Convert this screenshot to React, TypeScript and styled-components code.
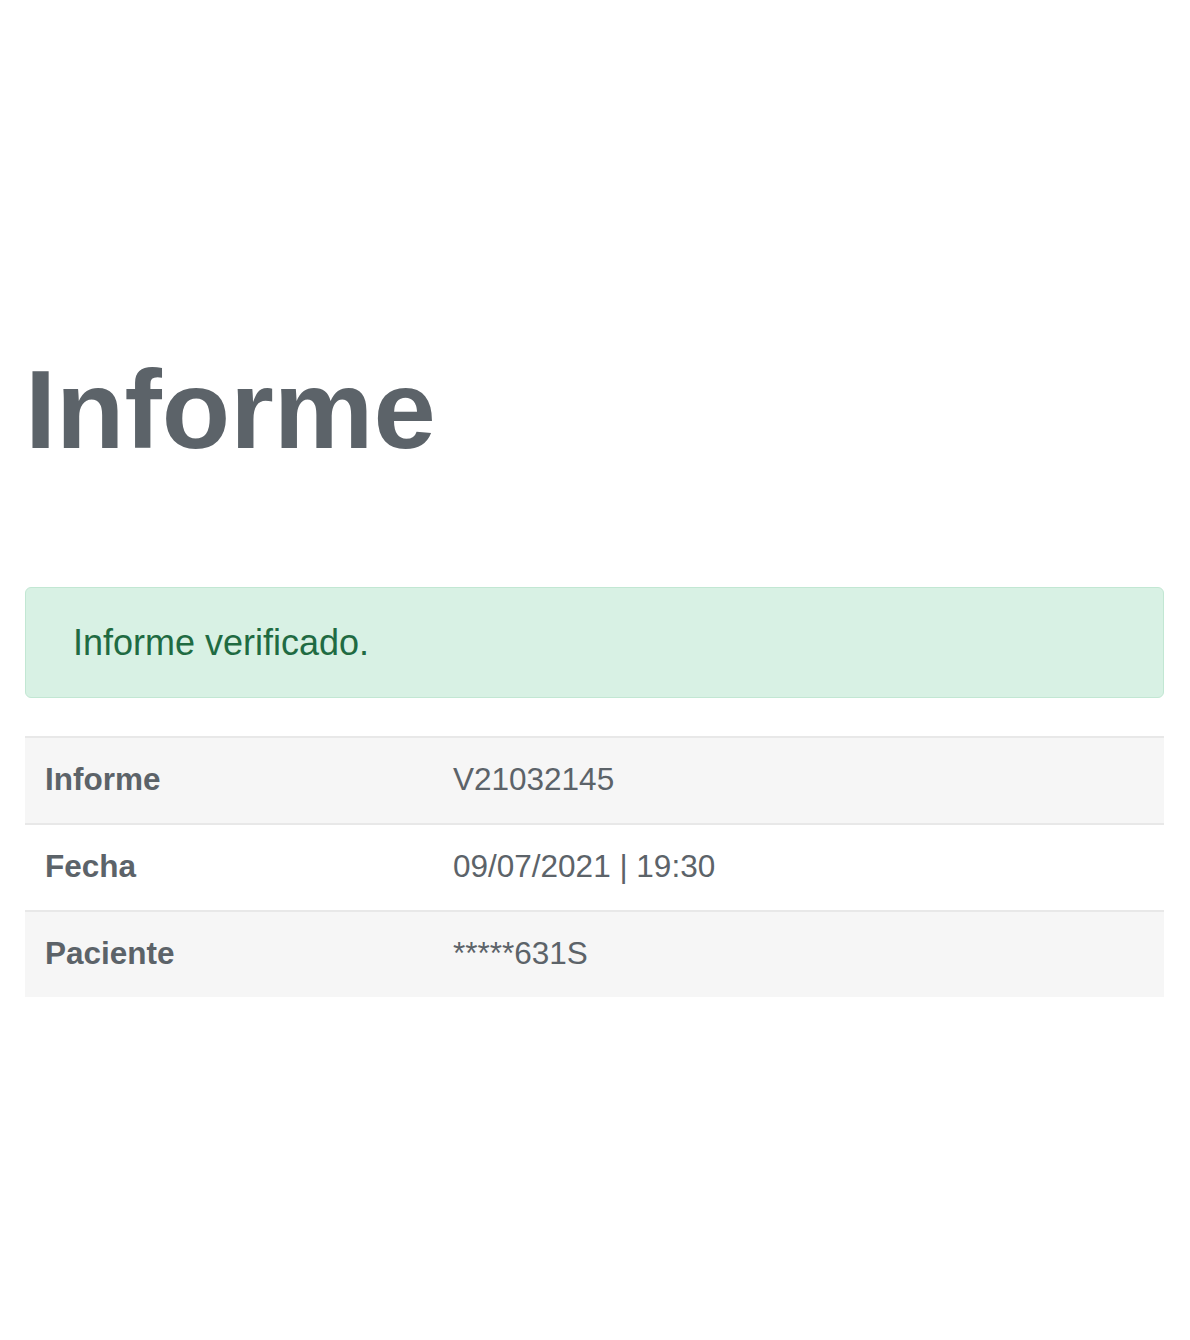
import React from 'react';
import styled, { createGlobalStyle } from 'styled-components';

const GlobalStyle = createGlobalStyle`
  html, body {
    margin: 0;
    padding: 0;
    background: #fff;
  }
  body {
    font-family: "Liberation Sans", Arial, sans-serif;
    color: #5c6369;
  }
`;

const Page = styled.div`
  padding: 343px 26px 200px 25px;
`;

const Title = styled.h1`
  margin: 0 0 110px;
  font-size: 112px;
  line-height: 1.2;
  font-weight: 700;
  color: #5c6369;
`;

const Alert = styled.div`
  padding: 28px 47px 27px;
  font-size: 36px;
  line-height: 54px;
  color: #1f6b42;
  background: #d8f1e4;
  border: 1px solid #c2e7d3;
  border-radius: 6px;
  margin-bottom: 38px;
`;

const Table = styled.table`
  width: 100%;
  border-collapse: collapse;
`;

const Row = styled.tr<{ $striped: boolean }>`
  background: ${(p) => (p.$striped ? '#f6f6f6' : '#ffffff')};
  border-top: 2px solid #e8e8e8;
`;

const Cell = styled.td<{ $head?: boolean }>`
  padding: 19px 20px 21px;
  font-size: 31.5px;
  line-height: 45px;
  font-weight: ${(p) => (p.$head ? 700 : 400)};
  width: ${(p) => (p.$head ? '368px' : 'auto')};
  color: #5c6369;
  vertical-align: top;
`;

const rows = [
    { label: 'Informe', value: 'V21032145' },
    { label: 'Fecha', value: '09/07/2021 | 19:30' },
    { label: 'Paciente', value: '*****631S' },
];

const App: React.FC = () => {
    return (
        <>
            <GlobalStyle />
            <Page>
                <Title>Informe</Title>
                <Alert>Informe verificado.</Alert>
                <Table>
                    <tbody>
                        {rows.map((r, i) => (
                            <Row key={r.label} $striped={i % 2 === 0}>
                                <Cell $head>{r.label}</Cell>
                                <Cell>{r.value}</Cell>
                            </Row>
                        ))}
                    </tbody>
                </Table>
            </Page>
        </>
    );
};

export default App;
